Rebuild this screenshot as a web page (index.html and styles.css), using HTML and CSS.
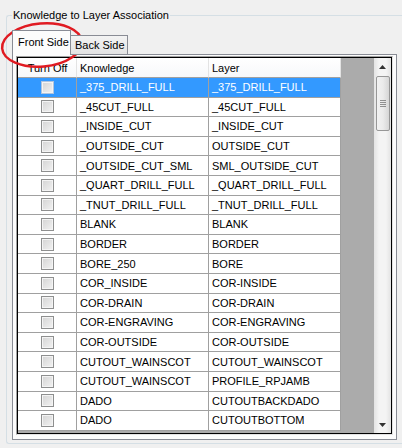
FILE: index.html
```html
<!DOCTYPE html>
<html lang="en">
	<head>
		<meta charset="UTF-8" />
		<title>Knowledge to Layer Association</title>
		<link rel="stylesheet" href="styles.css">
	</head>
	<body>
		<fieldset class="group">
			<legend>Knowledge to Layer Association</legend>
			<div class="tabs">
				<div class="tab tab-active">Front Side</div>
				<div class="tab">Back Side</div>
			</div>
			<div class="panel">
				<div class="grid-frame">
					<div class="grid">
						<div class="grid-body">
							<div class="row head">
								<div class="cell c-off">Turn Off</div>
								<div class="cell c-know">Knowledge</div>
								<div class="cell c-layer">Layer</div>
							</div>
							<div class="row selected">
								<div class="cell c-off"><span class="check"></span></div>
								<div class="cell c-know">_375_DRILL_FULL</div>
								<div class="cell c-layer">_375_DRILL_FULL</div>
							</div>
							<div class="row">
								<div class="cell c-off"><span class="check"></span></div>
								<div class="cell c-know">_45CUT_FULL</div>
								<div class="cell c-layer">_45CUT_FULL</div>
							</div>
							<div class="row">
								<div class="cell c-off"><span class="check"></span></div>
								<div class="cell c-know">_INSIDE_CUT</div>
								<div class="cell c-layer">_INSIDE_CUT</div>
							</div>
							<div class="row">
								<div class="cell c-off"><span class="check"></span></div>
								<div class="cell c-know">_OUTSIDE_CUT</div>
								<div class="cell c-layer">OUTSIDE_CUT</div>
							</div>
							<div class="row">
								<div class="cell c-off"><span class="check"></span></div>
								<div class="cell c-know">_OUTSIDE_CUT_SML</div>
								<div class="cell c-layer">SML_OUTSIDE_CUT</div>
							</div>
							<div class="row">
								<div class="cell c-off"><span class="check"></span></div>
								<div class="cell c-know">_QUART_DRILL_FULL</div>
								<div class="cell c-layer">_QUART_DRILL_FULL</div>
							</div>
							<div class="row">
								<div class="cell c-off"><span class="check"></span></div>
								<div class="cell c-know">_TNUT_DRILL_FULL</div>
								<div class="cell c-layer">_TNUT_DRILL_FULL</div>
							</div>
							<div class="row">
								<div class="cell c-off"><span class="check"></span></div>
								<div class="cell c-know">BLANK</div>
								<div class="cell c-layer">BLANK</div>
							</div>
							<div class="row">
								<div class="cell c-off"><span class="check"></span></div>
								<div class="cell c-know">BORDER</div>
								<div class="cell c-layer">BORDER</div>
							</div>
							<div class="row">
								<div class="cell c-off"><span class="check"></span></div>
								<div class="cell c-know">BORE_250</div>
								<div class="cell c-layer">BORE</div>
							</div>
							<div class="row">
								<div class="cell c-off"><span class="check"></span></div>
								<div class="cell c-know">COR_INSIDE</div>
								<div class="cell c-layer">COR-INSIDE</div>
							</div>
							<div class="row">
								<div class="cell c-off"><span class="check"></span></div>
								<div class="cell c-know">COR-DRAIN</div>
								<div class="cell c-layer">COR-DRAIN</div>
							</div>
							<div class="row">
								<div class="cell c-off"><span class="check"></span></div>
								<div class="cell c-know">COR-ENGRAVING</div>
								<div class="cell c-layer">COR-ENGRAVING</div>
							</div>
							<div class="row">
								<div class="cell c-off"><span class="check"></span></div>
								<div class="cell c-know">COR-OUTSIDE</div>
								<div class="cell c-layer">COR-OUTSIDE</div>
							</div>
							<div class="row">
								<div class="cell c-off"><span class="check"></span></div>
								<div class="cell c-know">CUTOUT_WAINSCOT</div>
								<div class="cell c-layer">CUTOUT_WAINSCOT</div>
							</div>
							<div class="row">
								<div class="cell c-off"><span class="check"></span></div>
								<div class="cell c-know">CUTOUT_WAINSCOT</div>
								<div class="cell c-layer">PROFILE_RPJAMB</div>
							</div>
							<div class="row">
								<div class="cell c-off"><span class="check"></span></div>
								<div class="cell c-know">DADO</div>
								<div class="cell c-layer">CUTOUTBACKDADO</div>
							</div>
							<div class="row">
								<div class="cell c-off"><span class="check"></span></div>
								<div class="cell c-know">DADO</div>
								<div class="cell c-layer">CUTOUTBOTTOM</div>
							</div>
						</div>
						<div class="scrollbar">
							<div class="sb-btn">
								<svg width="7" height="4" viewBox="0 0 7 4"><path d="M0 4 L3.5 0 L7 4 Z" fill="#333" /></svg>
							</div>
							<div class="sb-track">
								<div class="sb-thumb">
									<span class="grip"></span>
								</div>
							</div>
							<div class="sb-btn">
								<svg width="7" height="4" viewBox="0 0 7 4"><path d="M0 0 L3.5 4 L7 0 Z" fill="#333" /></svg>
							</div>
						</div>
					</div>
				</div>
			</div>
		</fieldset>
		<svg class="mark" width="100" height="80" viewBox="0 0 100 80">
			<ellipse cx="42" cy="45" rx="40" ry="21.5" transform="rotate(-5 42 45)" fill="none" stroke="#e01b22" stroke-width="2.5" />
		</svg>
	</body>
</html>
```

FILE: styles.css
```css
body {
	margin: 0;
	background-color: #f0f0f0;
	font-family: "Liberation Sans", Arial, sans-serif;
	font-size: 11px;
	color: #000;
}

.group {
	box-sizing: border-box;
	margin: 8px 0 0 6px;
	padding: 8px 0 3px 5px;
	border: 1px solid #d5dfe5;
	border-right: none;
	border-radius: 3px 0 0 3px;
}

.group legend {
	padding: 0 1px;
	margin-left: 0;
	line-height: 14px;
	height: 14px;
}

.tabs {
	display: flex;
	align-items: flex-end;
	height: 25px;
	margin-bottom: -1px;
	position: relative;
	z-index: 1;
}

.tab {
	box-sizing: border-box;
	height: 20px;
	width: 58px;
	margin-left: -1px;
	padding: 0 0 0 4px;
	line-height: 18px;
	border: 1px solid #898c95;
	background: linear-gradient(#f3f3f3, #e3e3e3);
}

.tab-active {
	height: 25px;
	width: 59px;
	margin-left: 0;
	margin-right: 0;
	padding-left: 5px;
	line-height: 22px;
	border-bottom: none;
	background: #fcfcfc;
	position: relative;
	z-index: 2;
}

.panel {
	box-sizing: border-box;
	width: 385px;
	height: 386px;
	padding: 1px 0 0 3px;
	border: 1px solid #898c95;
	background-color: #fcfcfc;
}

.grid-frame {
	box-sizing: border-box;
	width: 377px;
	height: 379px;
	border: 1px solid;
	border-color: #a0a0a0 #e3e3e3 #e3e3e3 #a0a0a0;
}

.grid {
	height: 100%;
	box-sizing: border-box;
	border: 1px solid #000;
	display: flex;
	overflow: hidden;
}

.grid-body {
	flex: 1;
	background-color: #ababab;
}

.row {
	display: flex;
	height: 19.6px;
	width: 323px;
}

.row.head {
	height: 20px;
}

.cell {
	box-sizing: border-box;
	display: flex;
	align-items: center;
	padding-left: 3px;
	border-right: 1px solid #a0a0a0;
	border-bottom: 1px solid #a0a0a0;
	background-color: #fff;
	white-space: nowrap;
	overflow: hidden;
}

.c-off {
	width: 59px;
	justify-content: center;
	padding-left: 0;
}

.c-know,
.c-layer {
	width: 132px;
}

.head .cell {
	background: linear-gradient(#ffffff, #f7f8fa);
	border-right-color: #e3e3e3;
	border-bottom-color: #a0a0a0;
}

.head .c-off {
	padding-left: 1px;
}

.selected .cell {
	background-color: #3399ff;
	color: #fff;
}

.check {
	box-sizing: border-box;
	width: 13px;
	height: 13px;
	border: 1px solid #8e8f8f;
	background: linear-gradient(135deg, #d4d4d4, #f2f2f2);
	box-shadow: inset 0 0 0 1px #f4f4f4;
}

.selected .check {
	border-color: #b0c4de;
}

.scrollbar {
	width: 17px;
	display: flex;
	flex-direction: column;
	background: linear-gradient(90deg, #e3e3e3, #f4f4f4 30%, #f4f4f4 70%, #e3e3e3);
}

.sb-btn {
	height: 17px;
	display: flex;
	align-items: center;
	justify-content: center;
}

.sb-track {
	flex: 1;
	padding: 1px 1px 0 2px;
}

.sb-thumb {
	box-sizing: border-box;
	height: 55px;
	border: 1px solid #979797;
	border-radius: 2px;
	background: linear-gradient(90deg, #f2f2f2, #ebebeb 50%, #d6d6d6);
	display: flex;
	align-items: center;
	justify-content: center;
}

.grip {
	width: 6px;
	height: 7px;
	background: repeating-linear-gradient(#555 0 1px, transparent 1px 2px);
	opacity: 0.6;
}

.mark {
	position: absolute;
	left: 0;
	top: 0;
	pointer-events: none;
}
```
